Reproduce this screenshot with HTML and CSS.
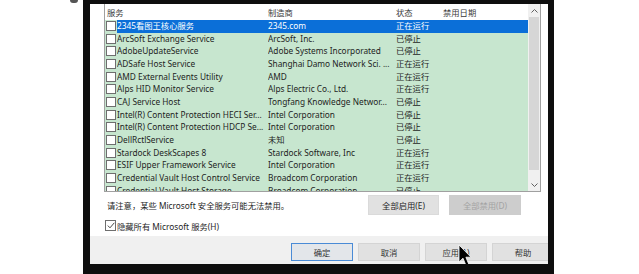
FILE: index.html
```html
<!DOCTYPE html>
<html lang="zh-CN">
<head>
<meta charset="utf-8">
<title>系统配置 - 服务</title>
<link rel="stylesheet" href="styles.css">
</head>
<body>
<div class="stage">
  <div class="blob"></div>
  <div class="monitor">
    <div class="window">
      <div class="main">
        <div class="list">
          <div class="list-body">
            <div class="head">
              <div class="hc hc-name">服务</div>
              <div class="hc">制造商</div>
              <div class="hc">状态</div>
              <div class="hc">禁用日期</div>
            </div>
            <div class="row sel"><span class="cb"></span><span class="c">2345看图王核心服务</span><span class="c">2345.com</span><span class="c">正在运行</span><span class="c"></span></div>
            <div class="row"><span class="cb"></span><span class="c">ArcSoft Exchange Service</span><span class="c">ArcSoft, Inc.</span><span class="c">已停止</span><span class="c"></span></div>
            <div class="row"><span class="cb"></span><span class="c">AdobeUpdateService</span><span class="c">Adobe Systems Incorporated</span><span class="c">已停止</span><span class="c"></span></div>
            <div class="row"><span class="cb"></span><span class="c">ADSafe Host Service</span><span class="c">Shanghai Damo Network Sci. ...</span><span class="c">正在运行</span><span class="c"></span></div>
            <div class="row"><span class="cb"></span><span class="c">AMD External Events Utility</span><span class="c">AMD</span><span class="c">正在运行</span><span class="c"></span></div>
            <div class="row"><span class="cb"></span><span class="c">Alps HID Monitor Service</span><span class="c">Alps Electric Co., Ltd.</span><span class="c">正在运行</span><span class="c"></span></div>
            <div class="row"><span class="cb"></span><span class="c">CAJ Service Host</span><span class="c">Tongfang Knowledge Networ...</span><span class="c">已停止</span><span class="c"></span></div>
            <div class="row"><span class="cb"></span><span class="c">Intel(R) Content Protection HECI Ser...</span><span class="c">Intel Corporation</span><span class="c">已停止</span><span class="c"></span></div>
            <div class="row"><span class="cb"></span><span class="c">Intel(R) Content Protection HDCP Se...</span><span class="c">Intel Corporation</span><span class="c">已停止</span><span class="c"></span></div>
            <div class="row"><span class="cb"></span><span class="c">DellRctlService</span><span class="c">未知</span><span class="c">已停止</span><span class="c"></span></div>
            <div class="row"><span class="cb"></span><span class="c">Stardock DeskScapes 8</span><span class="c">Stardock Software, Inc</span><span class="c">正在运行</span><span class="c"></span></div>
            <div class="row"><span class="cb"></span><span class="c">ESIF Upper Framework Service</span><span class="c">Intel Corporation</span><span class="c">正在运行</span><span class="c"></span></div>
            <div class="row"><span class="cb"></span><span class="c">Credential Vault Host Control Service</span><span class="c">Broadcom Corporation</span><span class="c">正在运行</span><span class="c"></span></div>
            <div class="row"><span class="cb"></span><span class="c">Credential Vault Host Storage</span><span class="c">Broadcom Corporation</span><span class="c">已停止</span><span class="c"></span></div>
          </div>
          <div class="scrollbar">
            <div class="sb-arrow"><svg width="7" height="4" viewBox="0 0 7 4"><path d="M0.5 3.5 L3.5 0.5 L6.5 3.5" fill="none" stroke="#606060" stroke-width="1"/></svg></div>
            <div class="sb-track"><div class="sb-thumb"></div></div>
            <div class="sb-arrow"><svg width="7" height="4" viewBox="0 0 7 4"><path d="M0.5 0.5 L3.5 3.5 L6.5 0.5" fill="none" stroke="#606060" stroke-width="1"/></svg></div>
          </div>
        </div>
        <div class="notice">
          <span class="note">请注意，某些 Microsoft 安全服务可能无法禁用。</span>
          <div class="actions">
            <button class="btn">全部启用(E)</button>
            <button class="btn disabled">全部禁用(D)</button>
          </div>
        </div>
        <div class="hide-ms">
          <span class="cb checked"><svg width="8" height="7" viewBox="0 0 8 7"><path d="M0.8 3.6 L3 5.8 L7.3 0.8" fill="none" stroke="#333" stroke-width="0.9"/></svg></span>
          <span>隐藏所有 Microsoft 服务(H)</span>
        </div>
      </div>
      <div class="footer">
        <button class="fbtn default">确定</button>
        <button class="fbtn">取消</button>
        <button class="fbtn">应用(A)</button>
        <button class="fbtn">帮助</button>
      </div>
      <svg class="cursor" width="14" height="23" viewBox="0 0 14 23"><path d="M1 1 L1 18 L5 14.2 L8 21.5 L10.8 20.3 L7.9 13.2 L13 13.2 Z" fill="#000" stroke="#fff" stroke-width="0.8" stroke-linejoin="round"/></svg>
    </div>
  </div>
</div>
</body>
</html>
```
FILE: styles.css
```css
html, body {
  margin: 0;
  padding: 0;
}
body {
  background: #ffffff;
  width: 639px;
  height: 274px;
  overflow: hidden;
  font-family: "Noto Sans", "Noto Sans CJK SC", sans-serif;
  font-size: 8.3px;
  color: #1e1e1e;
}
.stage {
  display: flex;
  padding-left: 83px;
  position: relative;
}
.blob {
  position: absolute;
  left: 70px;
  top: 0;
  width: 8px;
  height: 3px;
  border-radius: 0 0 4px 4px;
  background: #555;
}
.monitor {
  width: 471px;
  height: 274px;
  box-sizing: border-box;
  background: #0e0e0e;
  padding: 4px 6px 10px 7px;
}
.window {
  width: 458px;
  height: 260px;
  background: #ffffff;
  overflow: hidden;
  position: relative;
  display: flex;
  flex-direction: column;
}
.main {
  padding: 0 7px 0 14px;
}
.list {
  height: 188px;
  box-sizing: border-box;
  border: 1px solid #a0a0a0;
  border-top: none;
  display: flex;
  overflow: hidden;
}
.list-body {
  flex: 1;
  display: flex;
  flex-direction: column;
  min-width: 0;
}
.head {
  flex: 0 0 16px;
  height: 16px;
  display: grid;
  grid-template-columns: 163px 128px 47px 1fr;
  align-items: center;
  color: #3a3a3a;
  background: #fff;
}
.hc-name {
  padding-left: 2px;
}
.row {
  flex: 0 0 12.67px;
  height: 12.67px;
  display: grid;
  grid-template-columns: 12px 151px 128px 47px 1fr;
  align-items: stretch;
  background: #c7e6cf;
  line-height: 12.67px;
}
.c {
  white-space: nowrap;
  overflow: hidden;
}
.row.sel .c {
  background: #0b6fd8;
  color: #ffffff;
}
.cb {
  box-sizing: border-box;
  width: 10px;
  height: 10px;
  margin: 1px 0 0 1px;
  background: #ffffff;
  border: 1px solid #6e6e6e;
  display: inline-flex;
  align-items: center;
  justify-content: center;
}
.scrollbar {
  width: 12px;
  background: #f0f0f0;
  display: flex;
  flex-direction: column;
}
.sb-arrow {
  flex: 0 0 13px;
  height: 13px;
  display: flex;
  align-items: center;
  justify-content: center;
}
.sb-track {
  flex: 1;
  padding: 0 1px;
}
.sb-thumb {
  height: 153px;
  background: #d6d6d6;
}
.notice {
  margin-top: 3px;
  height: 20px;
  display: flex;
  align-items: center;
}
.note {
  padding-left: 3px;
  white-space: nowrap;
}
.actions {
  margin-left: auto;
  margin-right: 20px;
  display: flex;
  gap: 10px;
}
button {
  font-family: inherit;
  font-size: 8.3px;
  color: #1e1e1e;
  padding: 0;
  margin: 0;
}
.btn {
  width: 71px;
  height: 20px;
  background: #e1e1e1;
  border: 1px solid #dadada;
}
.btn.disabled {
  width: 72px;
  background: #cdcdcd;
  border-color: #cdcdcd;
  color: #a3a3a3;
}
.hide-ms {
  margin-top: 5px;
  height: 11px;
  display: flex;
  align-items: center;
  gap: 1px;
  padding-left: 1px;
}
.hide-ms .cb {
  width: 11px;
  height: 11px;
  margin: 0;
}
.footer {
  margin-top: auto;
  height: 28px;
  box-sizing: border-box;
  background: #f0f0f0;
  display: flex;
  gap: 5px;
  padding: 7px 0 0 201px;
}
.fbtn {
  flex: 0 0 62px;
  width: 62px;
  height: 18px;
  background: #e1e1e1;
  border: 1px solid #d4d4d4;
  color: #333;
}
.fbtn.default {
  border: 1px solid #4a8bd6;
  background: #e3e6ea;
}
.cursor {
  position: absolute;
  left: 368px;
  top: 240px;
}
```
